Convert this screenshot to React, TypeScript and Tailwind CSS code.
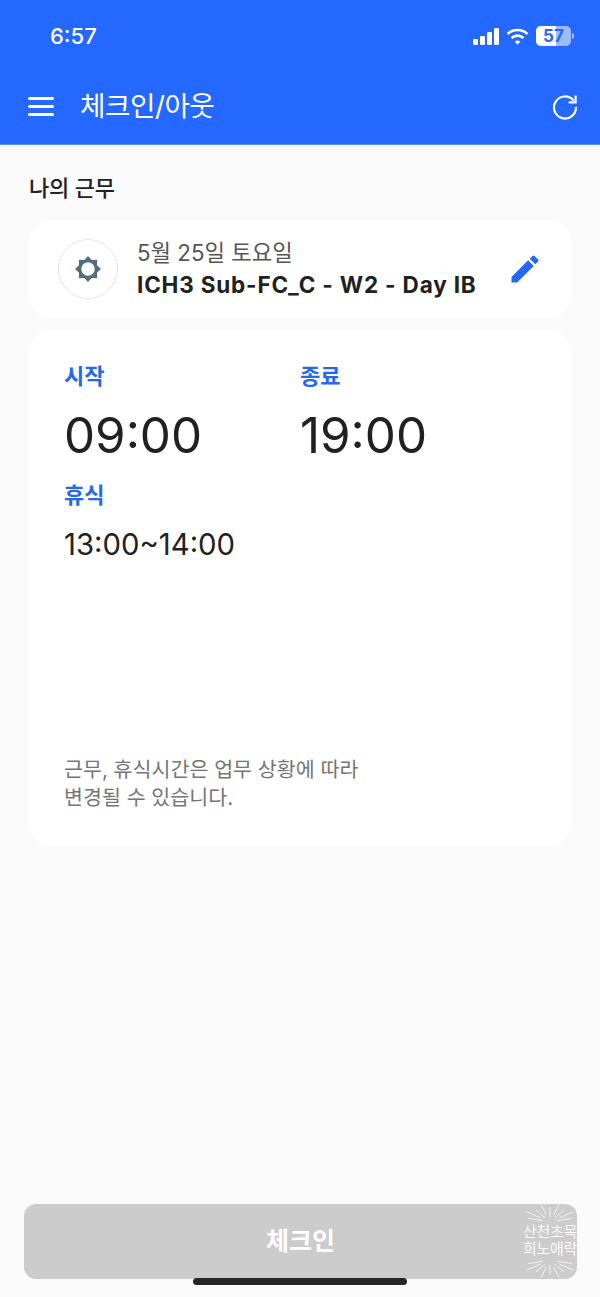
import React from "react";

function Rays({ top }: { top: boolean }) {
  const cx = 48, cy = top ? 32 : 0;
  const lines = [];
  for (let i = 0; i < 9; i++) {
    const a = (Math.PI * (i - 4)) / 9.5;
    const s = Math.sin(a), c = Math.cos(a) * (top ? -1 : 1);
    const r1 = i % 2 ? 12 : 8, r2 = i % 2 ? 30 : 24;
    lines.push(<line key={i} x1={cx + s * r1 * 1.5} y1={cy + c * r1} x2={cx + s * r2 * 1.5} y2={cy + c * r2} stroke="#fff" strokeOpacity={0.75} strokeWidth={1.6} />);
  }
  return <svg width="60" height="20" viewBox="0 0 96 32" className="block shrink-0">{lines}</svg>;
}

export default function App() {
  return (
    <div className="relative h-[1297px] w-[600px] overflow-hidden bg-[#fafafa] font-['Inter','Noto_Sans_CJK_KR',sans-serif] text-[#212121] flex flex-col">
      <header className="h-[145px] shrink-0 bg-[#2468ff] border-b border-[#5b8fe8] text-white pl-[28px] pr-[22px]">
        <div className="flex items-center justify-between h-[72px] pl-[22px] pr-[4px]">
          <span className="text-[22px] font-medium leading-none">6:57</span>
          <div className="flex items-center gap-[7px]">
            <svg width="26" height="17" viewBox="0 0 26 17" fill="#fff">
              <rect x="0" y="11" width="5" height="6" rx="1.3" />
              <rect x="7" y="8" width="5" height="9" rx="1.3" />
              <rect x="14" y="4" width="5" height="13" rx="1.3" />
              <rect x="21" y="0" width="5" height="17" rx="1.3" />
            </svg>
            <svg width="23" height="17" viewBox="0 0 23 17" fill="none" stroke="#fff" strokeWidth="2.6">
              <path d="M1.5 6 C7 0.6 16 0.6 21.5 6" />
              <path d="M5.5 10 C9 6.8 14 6.8 17.5 10" />
              <path d="M11.5 16.8 L8.6 13.4 C10.3 12.2 12.7 12.2 14.4 13.4 Z" fill="#fff" stroke="none" />
            </svg>
            <div className="relative flex items-center">
              <div className="relative h-[20px] w-[35px] overflow-hidden rounded-[5px] bg-[#9dbcff]">
                <div className="h-full w-[20px] bg-white" />
                <span className="absolute inset-0 flex items-center justify-center text-[17px] font-bold leading-none text-[#2468ff]">57</span>
              </div>
              <div className="ml-[1px] h-[6px] w-[2px] rounded-r-full bg-[#9dbcff]" />
            </div>
          </div>
        </div>
        <div className="flex items-center justify-between h-[72px] pb-[2px]">
          <div className="flex items-center gap-[26px]">
            <div className="flex flex-col gap-[5px] w-[26px]">
              <div className="h-[3px] bg-white rounded-sm" />
              <div className="h-[3px] bg-white rounded-sm" />
              <div className="h-[3px] bg-white rounded-sm" />
            </div>
            <span className="text-[27.7px] leading-none tracking-[-0.5px]">체크인/아웃</span>
          </div>
          <svg width="26" height="26" viewBox="0 0 26 26" fill="none" stroke="#fff" strokeWidth="2.2">
            <path d="M21.6 6.6 A11 11 0 1 0 24 13" />
            <path d="M23.6 1.5 V8.4 H16.6" />
          </svg>
        </div>
      </header>

      <main className="flex-1 px-[28px] pt-[30px]">
        <h2 className="pl-[1px] text-[22px] font-medium leading-[26px] tracking-[-0.2px]">나의 근무</h2>
        <section className="mt-[19px] h-[98px] rounded-[24px] bg-white flex items-center pl-[30px] pr-[30px]">
          <div className="h-[60px] w-[60px] rounded-full border border-[#e4e4e4] flex items-center justify-center shrink-0">
            <svg width="26" height="26" viewBox="0 0 24 24" fill="#546e7a">
              <path fillRule="evenodd" d="M12 0 L15.4 3.7 L20.5 3.5 L20.3 8.6 L24 12 L20.3 15.4 L20.5 20.5 L15.4 20.3 L12 24 L8.6 20.3 L3.5 20.5 L3.7 15.4 L0 12 L3.7 8.6 L3.5 3.5 L8.6 3.7 Z M12 5.8 A6.2 6.2 0 1 0 12 18.2 A6.2 6.2 0 1 0 12 5.8 Z" />
            </svg>
          </div>
          <div className="ml-[19px] flex-1">
            <div className="text-[22.3px] leading-[32px] text-[#555]">5월 25일 토요일</div>
            <div className="text-[22.5px] font-bold leading-[32px] tracking-[0.82px]">ICH3 Sub-FC_C - W2 - Day IB</div>
          </div>
          <svg width="36" height="36" viewBox="0 0 24 24" fill="#2468f5" className="shrink-0 mr-[-1px]">
            <path d="M3 17.25V21h3.75L17.81 9.94l-3.75-3.75L3 17.25zM20.71 7.04a1 1 0 0 0 0-1.41l-2.34-2.34a1 1 0 0 0-1.41 0l-1.83 1.83 3.75 3.75 1.83-1.83z" />
          </svg>
        </section>

        <section className="mt-[12px] h-[516px] rounded-[24px] bg-white px-[36px] pt-[32px] flex flex-col">
          <div className="grid grid-cols-[236px_1fr]">
            <div>
              <div className="text-[22px] font-semibold leading-[28px] text-[#2468f0]">시작</div>
              <div className="mt-[15px] text-[49.3px] font-normal leading-[60px] text-[#212121]">09:00</div>
            </div>
            <div>
              <div className="text-[22px] font-semibold leading-[28px] text-[#2468f0]">종료</div>
              <div className="mt-[15px] text-[49.3px] font-normal leading-[60px] text-[#212121]">19:00</div>
            </div>
          </div>
          <div className="mt-[16px] text-[22px] font-semibold leading-[28px] text-[#2468f0]">휴식</div>
          <div className="mt-[18px] text-[29.3px] font-normal leading-[36px]">13:00~14:00</div>
          <div className="mt-auto mb-[34px] text-[20.6px] leading-[28px] text-[#757575]">
            근무, 휴식시간은 업무 상황에 따라
            <br />
            변경될 수 있습니다.
          </div>
        </section>
      </main>

      <footer className="shrink-0 pl-[24px] pb-[18px] pr-[23px]">
        <button className="h-[75px] w-full rounded-[12px] bg-[#cccccc] text-[25px] font-bold text-white flex items-center justify-center">
          체크인
        </button>
      </footer>

      <div className="absolute left-[193px] top-[1278px] h-[7px] w-[214px] rounded-full bg-[#262626]" />

      <div className="absolute left-[515px] top-[1202px] w-[70px] h-[78px] flex flex-col items-center text-white">
        <Rays top />
        <div className="mt-[1px] w-[70px] text-center text-[15px] leading-[17px] tracking-[-0.3px] whitespace-nowrap opacity-90">
          산천초목
          <br />
          희노애락
        </div>
        <div className="mt-[3px]"><Rays top={false} /></div>
      </div>
    </div>
  );
}
